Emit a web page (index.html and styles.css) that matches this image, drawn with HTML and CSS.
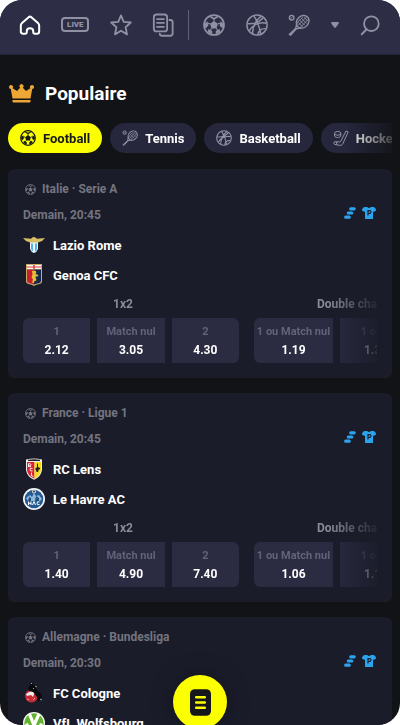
FILE: index.html
```html
<!DOCTYPE html>
<html lang="fr">
<head>
    <meta charset="UTF-8">
    <meta name="viewport" content="width=device-width, initial-scale=1.0">
    <title>Populaire</title>
    <link rel="stylesheet" href="styles.css">
</head>
<body>
    <svg class="sprite" aria-hidden="true">
        <symbol id="football" viewBox="0 0 24 24">
            <circle cx="12" cy="12" r="10.900" fill="none" stroke="currentColor" stroke-width="1.900"/>
            <path fill="currentColor" d="M12 7.600l4.300 3.100-1.600 5H9.300l-1.600-5zM8 2.300l4 1.900 4-1.900.3 1.600L12 6.400 7.700 3.900zM1.500 11l3.300-3 1.100 4.600-3 3.200zM22.500 11l-3.300-3-1.100 4.600 3 3.200zM5.200 19.500l.6-3.200 4.200 2.200.3 3.800zM18.800 19.500l-.6-3.200-4.200 2.200-.3 3.800z"/>
            <path fill="none" stroke="currentColor" stroke-width="1.200" d="M12 8V5M7.800 10.800L5 10M16.200 10.800L19 10M9.500 15.500l-1.800 2.700M14.500 15.500l1.800 2.700"/>
        </symbol>
        <symbol id="basketball" viewBox="0 0 24 24">
            <g fill="none" stroke="currentColor" stroke-width="1.600">
                <circle cx="12" cy="12" r="11"/>
                <path d="M8.500 2c3 4.500 6.200 11 7.500 20M16.500 2.300C11 6.500 7.500 13 7 21.500M1.400 10.500C7 11 14 9.500 18.800 4M3.500 18.500C7 12 14 8.500 22.300 10M13 22.500c.3-4 3.500-7 8.500-6.500"/>
            </g>
        </symbol>
        <symbol id="tennis" viewBox="0 0 24 24">
            <g fill="none" stroke="currentColor" stroke-width="1.500">
                <circle cx="4" cy="4" r="2.500"/>
                <path d="M2.500 4.800C4 4.700 4.800 4 5.200 2.500" stroke-width=".8"/>
                <ellipse cx="16" cy="8.500" rx="7.500" ry="6.300" transform="rotate(-45 16 8.500)"/>
                <path d="M9.800 9.500L8.500 15.500 1.800 22M14.500 15L9 16.200 3 23M1 21.500l2 2"/>
                <path d="M11 9l5 5M12 6l6.500 6.500M14.500 4.500l6 6M17.500 3.500l4.500 4.500M20 3.500l-9 9M22 6l-8.500 8.500M16 3.500l-6 6" stroke-width="1"/>
            </g>
        </symbol>
        <symbol id="hockey" viewBox="0 0 24 24">
            <g fill="none" stroke="currentColor" stroke-width="1.500" stroke-linejoin="round">
                <ellipse cx="7" cy="5" rx="4.700" ry="2.800"/>
                <path d="M2.300 5v4c1 3 8.400 3 9.400 0V5M19.500 1.500l3.300 1.300-8 17.700c-1 2-2.500 2.700-4.500 2.500l-8-1.300c-1.500-.4-1.300-4.200.6-4.200l7 .4c1 0 1.600-.5 2-1.400zM5.500 17.700v4.300"/>
            </g>
        </symbol>
        <symbol id="boost" viewBox="0 0 12 12">
            <path fill="none" stroke="currentColor" stroke-width="3.200" stroke-linecap="round" d="M6.700 1.800h3.500M4.300 6h3.500M1.700 10.200h3.500"/>
        </symbol>
        <symbol id="shirt" viewBox="0 0 14 12">
            <path fill="currentColor" d="M3 0h2l2 1.300L9 0h2c2 0 3 1.800 3 3.800L11 5v7H3V5L0 3.800C0 1.800 1 0 3 0z"/>
            <path fill="none" stroke="#1b1c2a" stroke-width="1.100" d="M6 8.500V3.600h1.500q1.500 0 1.500 1.400T7.500 6.400H6"/>
        </symbol>
    </svg>

    <div class="app">
        <header class="topbar">
            <nav class="topnav">
                <a href="#" class="active" aria-label="Accueil">
                    <svg viewBox="0 0 24 24" class="icon line"><path d="M3 10.200L10.500 3.500q1.500-1.200 3 0L21 10.200q1 1 1 2.300V19q0 2.500-2.500 2.500H17q-1.500 0-1.500-1.500v-1.500q0-3-3.500-3t-3.500 3V20q0 1.500-1.500 1.500H4.500Q2 21.500 2 19v-6.500q0-1.300 1-2.300z" stroke-width="2.200"/></svg>
                </a>
                <a href="#" aria-label="Live"><span class="live">LIVE</span></a>
                <a href="#" aria-label="Favoris">
                    <svg viewBox="0 0 24 24" class="icon line"><path d="M12 1.500l3 7 7.700.8-5.700 5.200 1.600 7.700-6.600-4-6.600 4L7 14.500 1.300 9.300 9 8.500z"/></svg>
                </a>
                <a href="#" aria-label="Paris">
                    <svg viewBox="0 0 24 26" class="icon line doc"><rect x="2" y="1.500" width="14.500" height="18.500" rx="3"/><path d="M5.500 6.500H13M5.500 10.700H13M5.500 15H13M19 7.500h1q2.500 0 2.500 2.500v12q0 2.700-2.500 2.700h-9q-2.500 0-2.500-2.200"/></svg>
                </a>
            </nav>
            <nav class="topnav sports">
                <a href="#" aria-label="Football"><svg class="icon"><use href="#football"/></svg></a>
                <a href="#" aria-label="Basketball"><svg class="icon"><use href="#basketball"/></svg></a>
                <a href="#" aria-label="Tennis"><svg class="icon"><use href="#tennis"/></svg></a>
                <button class="more" aria-label="Plus de sports"><svg viewBox="0 0 8 6"><path d="M1 0h6q1.300.4.700 1.500L5 5.300q-1 1-2 0L.3 1.500Q-.3.400 1 0z" fill="currentColor"/></svg></button>
                <button aria-label="Rechercher"><svg viewBox="0 0 24 24" class="icon line"><circle cx="13.500" cy="10.500" r="8"/><path d="M8 17l-5 5" stroke-width="2.200"/></svg></button>
            </nav>
        </header>

        <main class="content">
            <h1 class="title">
                <svg viewBox="0 0 26 20" class="crown"><path fill="#eda734" d="M4 14.500L2.300 5a2 2 0 1 1 1.800-.8L8.500 7 11.700 3.700a2 2 0 1 1 2.600 0L17.500 7l4.400-2.800A2 2 0 1 1 23.700 5L22 14.500zM4 16h18v1.500q0 1-1 1H5q-1 0-1-1z"/></svg>
                Populaire
            </h1>

            <div class="tabs">
                <button class="tab selected"><svg><use href="#football"/></svg>Football</button>
                <button class="tab"><svg><use href="#tennis"/></svg>Tennis</button>
                <button class="tab"><svg><use href="#basketball"/></svg>Basketball</button>
                <button class="tab"><svg><use href="#hockey"/></svg>Hockey</button>
            </div>

            <section class="card">
                <div class="league"><svg><use href="#football"/></svg>Italie · Serie A</div>
                <div class="info">
                    <span>Demain, 20:45</span>
                    <svg class="boost"><use href="#boost"/></svg>
                    <svg class="shirt"><use href="#shirt"/></svg>
                </div>
                <div class="team">
                    <svg viewBox="0 0 22 22"><path fill="#d8bd67" d="M0 4l8 .7 2-1.700 2 .2 2 1.500L22 4l-3 3-4 1.500-1.500 2H8.500L7 8.500 3 7z"/><path fill="#e9f4fb" d="M7 8.500h8V15q-1 3-4 4-3-1-4-4z"/><path fill="#55b3e8" d="M8 9.500h2v8q-2-1-2-3zM12 9.500h2V15q0 1.500-2 2.500z"/></svg>
                    Lazio Rome
                </div>
                <div class="team">
                    <svg viewBox="0 0 22 22"><path fill="#c9a968" d="M3 0h16v18q-1 2-5 2.500L11 22l-3-1.500Q4 20 3 18z"/><path fill="#fff" d="M4 1h14v4H4z"/><path fill="#d33" d="M10.300 1h1.400v4h-1.400zM4 2.500h14v1H4z"/><path fill="#c5202c" d="M4 5.500h7v15L8 19.500q-4-.5-4-3z"/><path fill="#15274d" d="M11 5.500h7v11q0 2.500-4 3l-3 1z"/><path fill="#e6be38" d="M9 7l3-.5 1.500 1.500-1 2 3 1-1 1.500h-2l1 4-2 .5-.5 2-2-.5 1-3-1.500-2 1-3z"/></svg>
                    Genoa CFC
                </div>
                <div class="markets">
                    <div class="market">
                        <div class="label">1x2</div>
                        <div class="odds">
                            <button><span>1</span>2.12</button>
                            <button><span>Match nul</span>3.05</button>
                            <button><span>2</span>4.30</button>
                        </div>
                    </div>
                    <div class="market double">
                        <div class="label">Double chance</div>
                        <div class="odds">
                            <button><span>1 ou Match nul</span>1.19</button>
                            <button><span>1 ou 2</span>1.38</button>
                        </div>
                    </div>
                </div>
            </section>

            <section class="card">
                <div class="league"><svg><use href="#football"/></svg>France · Ligue 1</div>
                <div class="info">
                    <span>Demain, 20:45</span>
                    <svg class="boost"><use href="#boost"/></svg>
                    <svg class="shirt"><use href="#shirt"/></svg>
                </div>
                <div class="team">
                    <svg viewBox="0 0 22 22"><path fill="#eee" d="M3 1.500Q11-.5 19 1.500V12q-1 7-8 9.700Q4 19 3 12z"/><path fill="#d92332" d="M4 4h7.500v16.700Q5 18 4 12z"/><path fill="#f5d91f" d="M11.500 4H18v8q-1 6-6.500 8.700z"/><path fill="#222" d="M5 1.800Q11 .8 17 1.800v1.200H5zM14 5l1 1v3l2 1v1l-1.500 1-.5 2h-1.500l-.5-2-1-1 2-2z"/><path fill="none" stroke="#fff" stroke-width=".9" d="M5.500 9V5.700q2.500-.3 2.500 1T6 8l2 1M9.500 10.500q-2.500-1-2.500 1t2.500 1.500M8.500 14.500v3.300l2 .6"/></svg>
                    RC Lens
                </div>
                <div class="team">
                    <svg viewBox="0 0 22 22"><circle cx="11" cy="11" r="11" fill="#f4f6f8"/><circle cx="11" cy="11" r="9.300" fill="#235a93"/><path fill="#8fb7d9" d="M3 10l4-3 2 2 2-4 2 3 3-1 3 4-2 2H5z"/><path fill="#245080" d="M6 9l2 1v3H5zM13 8l3 2v3h-4z"/><circle cx="11" cy="3.500" r="2" fill="#ddd"/><circle cx="11" cy="3.500" r=".9" fill="#222"/><path fill="none" stroke="#fff" stroke-width="1" d="M5.500 17v-3.500M8 17v-3.500M5.500 15.300H8M9.500 17l1.500-3.500 1.500 3.500M16.500 14q-2.500-1-2.500 1.200t2.500 1.300"/></svg>
                    Le Havre AC
                </div>
                <div class="markets">
                    <div class="market">
                        <div class="label">1x2</div>
                        <div class="odds">
                            <button><span>1</span>1.40</button>
                            <button><span>Match nul</span>4.90</button>
                            <button><span>2</span>7.40</button>
                        </div>
                    </div>
                    <div class="market double">
                        <div class="label">Double chance</div>
                        <div class="odds">
                            <button><span>1 ou Match nul</span>1.06</button>
                            <button><span>1 ou 2</span>1.18</button>
                        </div>
                    </div>
                </div>
            </section>

            <section class="card">
                <div class="league"><svg><use href="#football"/></svg>Allemagne · Bundesliga</div>
                <div class="info">
                    <span>Demain, 20:30</span>
                    <svg class="boost"><use href="#boost"/></svg>
                    <svg class="shirt"><use href="#shirt"/></svg>
                </div>
                <div class="team">
                    <svg viewBox="0 0 22 22"><circle cx="8.500" cy="14" r="6.500" fill="#c92a35"/><path fill="#eee" d="M3 12l5-3 6 2-3 1-1 3-2-2-4 1z"/><path fill="#090a0d" d="M5 6l4-5 2 2 4 1-2 2 2 4 3 1 1 5-4 4-1-5-4-5-4-1z"/><path fill="none" stroke="#ccc" stroke-width=".8" d="M8 2l1-1M12 4l2 1M17 17l2 1M10 6l1 1M4 17l2 1M12 16l-2 2"/></svg>
                    FC Cologne
                </div>
                <div class="team">
                    <svg viewBox="0 0 22 22"><circle cx="11" cy="11" r="11" fill="#f3f8ef"/><circle cx="11" cy="11" r="9.700" fill="#63b32e"/><path fill="#fff" d="M5 2.500l3-1L11 9l3.500-7.500 3 1L12 15h-2z"/><path fill="#fff" d="M2 12l3-1 3 7-2 2zM20 12l-3-1-3 7 2 2z"/></svg>
                    VfL Wolfsbourg
                </div>
            </section>
        </main>

        <button class="betslip" aria-label="Mon pari">
            <svg viewBox="0 0 22 28"><rect width="22" height="28" rx="5" fill="#15171b"/><path d="M6.500 8.500h9M6.500 14h9M6.500 19.500h9" stroke="#fbff00" stroke-width="2.600" stroke-linecap="round"/></svg>
        </button>
    </div>
</body>
</html>
```
FILE: styles.css
```css
* {
    box-sizing: border-box;
}
body {
    margin: 0;
    background: #fff;
    font-family: Roboto, "Noto Sans", sans-serif;
    font-size: 13px;
    font-weight: bold;
    color: #fff;
}
button {
    font: inherit;
    color: inherit;
    border: none;
    padding: 0;
    background: none;
    cursor: pointer;
}
svg {
    display: block;
    flex: none;
}
.sprite {
    position: absolute;
    width: 0;
    height: 0;
}
.app {
    position: relative;
    display: flex;
    flex-direction: column;
    height: 100vh;
    border-radius: 22px;
    background: #111316;
    overflow: hidden;
}

/* top bar */
.topbar {
    display: flex;
    align-items: center;
    flex: none;
    height: 55px;
    padding: 0 19px 5px;
    background: #2d2e45;
    border-bottom: 1px solid #23243a;
}
.topnav {
    display: flex;
    align-items: center;
    justify-content: space-between;
    flex: 155;
    color: #8f90a3;
}
.topnav a,
.topnav button {
    display: block;
    color: inherit;
    text-decoration: none;
}
.topnav .active {
    color: #fff;
}
.sports {
    flex: 178;
    height: 30px;
    margin-left: 14px;
    padding-left: 14px;
    border-left: 1px solid #60627a;
}
.icon {
    width: 22px;
    height: 22px;
}
.doc {
    height: 24px;
}
.line {
    fill: none;
    stroke: currentColor;
    stroke-width: 2;
    stroke-linecap: round;
    stroke-linejoin: round;
}
.live {
    display: block;
    width: 28px;
    border: 2px solid currentColor;
    border-radius: 4px;
    font-size: 8px;
    font-weight: 900;
    line-height: 11px;
    text-align: center;
}
.more svg {
    width: 8px;
    height: 6px;
}

.content {
    flex: 1;
    padding: 24px 8px 0;
    overflow: hidden;
}
.title {
    display: flex;
    align-items: center;
    gap: 10px;
    margin: 0 0 14px;
    font-size: 19px;
    line-height: 30px;
}
.crown {
    width: 27px;
    height: 20px;
}

/* sport tabs */
.tabs {
    display: flex;
    gap: 8px;
    margin-bottom: 16px;
    overflow: hidden;
    mask-image: linear-gradient(to right, #000 88%, rgba(0,0,0,0.2));
}
.tab {
    display: flex;
    align-items: center;
    flex: none;
    gap: 7px;
    height: 30px;
    padding: 0 12px;
    border-radius: 15px;
    background: #26273d;
}
.tab svg {
    width: 16px;
    height: 16px;
    color: #9293a6;
}
.tab.selected,
.tab.selected svg {
    color: #15171b;
}
.tab.selected {
    background: #fbff00;
}

/* match cards */
.card {
    margin-bottom: 15px;
    padding: 10px 15px 15px;
    border-radius: 6px;
    background: #1b1c2a;
}
.league {
    display: flex;
    align-items: center;
    gap: 6px;
    height: 20px;
    padding-left: 2px;
    font-size: 12px;
    color: #74757f;
}
.league svg {
    width: 11px;
    height: 11px;
}
.info {
    display: flex;
    align-items: center;
    gap: 6px;
    height: 31px;
    font-size: 12px;
    color: #74757f;
}
.info span {
    flex: 1;
}
.info svg {
    height: 12px;
    margin-bottom: 4px;
    color: #2ba3ee;
}
.boost {
    width: 12px;
}
.shirt {
    width: 14px;
    margin-right: 1px;
}
.team {
    display: flex;
    align-items: center;
    gap: 8px;
    height: 30px;
}
.team svg {
    width: 22px;
    height: 22px;
}
.markets {
    display: flex;
    gap: 15px;
    overflow: hidden;
    mask-image: linear-gradient(to right, #000 86%, rgba(0,0,0,0.1));
}
.market {
    flex: none;
    width: 216px;
}
.label {
    padding-right: 16px;
    font-size: 12px;
    line-height: 28px;
    text-align: center;
    color: #8a8b98;
}
.double .label {
    padding: 0 0 0 63px;
    text-align: left;
}
.odds {
    display: flex;
    gap: 7px;
}
.odds button {
    flex: 1;
    height: 45px;
    background: #2b2c42;
    font-size: 12px;
    line-height: 18px;
    white-space: nowrap;
}
.odds button:first-child {
    border-radius: 6px 0 0 6px;
}
.odds button:last-child {
    border-radius: 0 6px 6px 0;
}
.odds span {
    display: block;
    font-size: 11px;
    color: #62637a;
}
.double {
    width: 158px;
}
.double .odds button:first-child {
    flex: none;
    width: 79px;
}

.betslip {
    position: absolute;
    bottom: -4px;
    left: 50%;
    display: grid;
    place-items: center;
    width: 54px;
    height: 54px;
    margin-left: -27px;
    border-radius: 50%;
    background: #fbff00;
    box-shadow: 0 0 24px rgba(0,0,0,0.3);
}
.betslip svg {
    width: 21px;
    height: 27px;
}
```
